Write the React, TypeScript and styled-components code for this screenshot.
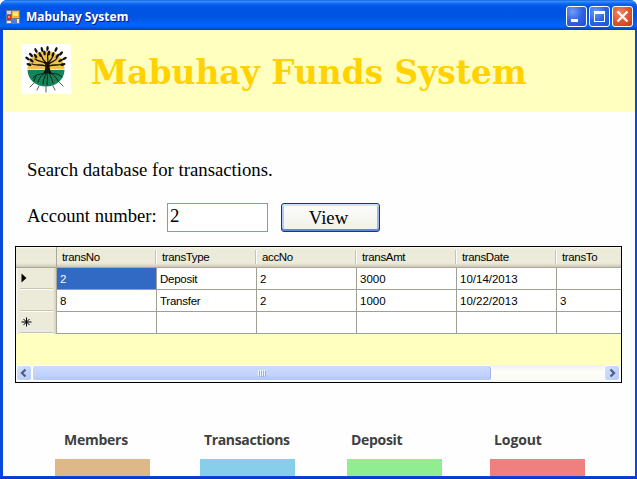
import React from "react";
import styled, { createGlobalStyle, css } from "styled-components";

const GlobalStyle = createGlobalStyle`
  *, *::before, *::after { box-sizing: border-box; }
  html, body { margin: 0; padding: 0; background: #fff; overflow: hidden; }
`;

const Window = styled.div`
  display: flex;
  flex-direction: column;
  width: 637px;
  height: 479px;
  border-radius: 7px 7px 0 0;
  overflow: hidden;
  background: linear-gradient(#0a47dc 476px, #0a35c8 479px);
`;

const TitleBar = styled.header`
  display: flex;
  align-items: center;
  flex: none;
  height: 30px;
  padding: 3px 4px 0 6px;
  background: linear-gradient(
    #0a4fd0 0, #3d95ff 1px, #2a84fa 2px, #0a63ee 4px, #0055e5 7px,
    #0054e3 17px, #0360f6 23px, #0464fa 26px, #0450d8 28px, #013fc0 30px
  );
`;

const WindowTitle = styled.h1`
  flex: 1;
  margin: 1px 0 0 4px;
  font: bold 12px/16px "Noto Sans", sans-serif;
  color: #fff;
  text-shadow: 1px 1px 0 #0a1883;
  white-space: nowrap;
`;

const Controls = styled.div`
  display: flex;
  gap: 2px;
`;

const ControlButton = styled.button<{ $danger?: boolean }>`
  display: block;
  width: 21px;
  height: 21px;
  padding: 0;
  border: 1px solid #fff;
  border-radius: 3px;
  background: ${(p) =>
    p.$danger
      ? "radial-gradient(circle at 35% 30%, #ee8868 0, #e35a32 45%, #c43a12 100%)"
      : "radial-gradient(circle at 30% 25%, #6f9cf5 0, #2f62e2 50%, #1f50d8 100%)"};
  svg { display: block; }
`;

const Client = styled.main`
  display: flex;
  flex-direction: column;
  flex: 1;
  margin: 0 2px 3px 3px;
  background: #fefefe;
`;

const Banner = styled.div`
  display: flex;
  align-items: flex-start;
  flex: none;
  height: 82px;
  padding: 14px 0 0 18px;
  background: #ffffc0;
`;

const Logo = styled.svg`
  display: block;
  flex: none;
`;

const BannerTitle = styled.h2`
  margin: 5px 0 0 20px;
  font: bold 34px/46px "DejaVu Serif", serif;
  color: #ffd200;
  white-space: nowrap;
  transform: scaleX(0.966);
  transform-origin: left;
`;

const serifText = css`
  font-family: "Liberation Serif", serif;
  font-size: 18.75px;
  line-height: 22px;
  color: #000;
`;

const Prompt = styled.p`
  ${serifText}
  margin: 47px 0 0 24px;
  white-space: nowrap;
`;

const SearchRow = styled.div`
  display: flex;
  align-items: center;
  height: 30px;
  margin: 21px 0 0 24px;
`;

const FieldLabel = styled.label`
  ${serifText}
  width: 140px;
  padding-bottom: 3px;
  font-size: 18.6px;
  white-space: nowrap;
`;

const Field = styled.input`
  ${serifText}
  width: 101px;
  height: 29px;
  padding: 0 2px 3px;
  border: 1px solid #7f9db9;
  border-radius: 0;
  background: #fff;
  outline: none;
`;

const ViewButton = styled.button`
  ${serifText}
  width: 99px;
  height: 29px;
  margin-left: 13px;
  padding: 1px 4px 0 0;
  border: 1px solid #0b3b78;
  border-radius: 3px;
  background: linear-gradient(#fdfdfb, #f1f0ea);
  box-shadow: inset 0 2px 0 #cee3fb, inset 0 -2px 0 #6488d8, inset 2px 0 0 #b4ccf3, inset -2px 0 0 #9ab8ee;
`;

const DataGrid = styled.section`
  display: flex;
  flex-direction: column;
  flex: none;
  width: 607px;
  height: 137px;
  margin: 14px 0 0 12px;
  border: 1px solid #000;
  background: #ffffc0;
  overflow: hidden;
`;

const GridRow = styled.div`
  display: grid;
  grid-template-columns: 41px repeat(5, 100px) 64px;
  grid-template-rows: 100%;
  flex: none;
  height: 22px;
  font: 11.5px/22px "Liberation Sans", sans-serif;
  color: #000;
`;

const HeaderRow = styled(GridRow)`
  height: 21px;
  line-height: 20px;
  letter-spacing: -0.35px;
  border-bottom: 1px solid #aca899;
  background: linear-gradient(#fbfaf5 0, #ecead9 2px, #ecead9 16px, #ddd9c9 18px, #cbc7b8 20px);
`;

const Corner = styled.div`
  border-right: 1px solid #aca899;
`;

const HeaderCell = styled.div`
  display: flex;
  align-items: center;
  justify-content: space-between;
  padding-left: 5px;
  white-space: nowrap;
  &::after {
    content: "";
    width: 2px;
    height: 14px;
    border-left: 1px solid #c7c5b2;
    border-right: 1px solid #fff;
  }
  &:last-child::after { display: none; }
`;

const RowHeader = styled.div`
  display: flex;
  align-items: center;
  padding: 0 4px 3px 5px;
  border-right: 1px solid #aca899;
  background: linear-gradient(to right, #fbfaf5 0, #ecead9 2px, #ecead9 37px, #d2cebe 40px);
  position: relative;
  &::after {
    content: "";
    position: absolute;
    left: 4px;
    right: 3px;
    bottom: 0;
    height: 2px;
    border-top: 1px solid #c7c5b2;
    border-bottom: 1px solid #fff;
  }
`;

const Cell = styled.div<{ $selected?: boolean; $text?: boolean }>`
  padding-left: 3px;
  border-right: 1px solid #a09f96;
  border-bottom: 1px solid #a09f96;
  background: ${(p) => (p.$selected ? "#316ac5" : "#fff")};
  color: ${(p) => (p.$selected ? "#fff" : "#000")};
  letter-spacing: ${(p) => (p.$text ? "-0.25px" : "normal")};
  white-space: nowrap;
  &:last-child { border-right: 0; }
`;

const ScrollBar = styled.div`
  display: flex;
  flex: none;
  height: 17px;
  margin-top: auto;
  padding-right: 1px;
  background: linear-gradient(#f0efe8, #fefefb 40%, #f8f8f4);
`;

const ScrollArrow = styled.div`
  display: flex;
  align-items: center;
  justify-content: center;
  width: 16px;
  height: 16px;
  border: 1px solid #fff;
  border-radius: 3px;
  background: linear-gradient(135deg, #d5e1fd, #b5caf9);
`;

const ScrollTrack = styled.div`
  flex: 1;
`;

const ScrollThumb = styled.div`
  display: flex;
  align-items: center;
  justify-content: center;
  width: 460px;
  height: 16px;
  border: 1px solid #fff;
  border-radius: 3px;
  background: linear-gradient(#cddbfe, #c2d3fd 60%, #b2c7f7);
  box-shadow: inset -1px 0 0 #9eb6ec;
`;

const Nav = styled.nav`
  display: grid;
  grid-template-columns: 145px 147px 143px 95px;
  margin: auto 0 0 52px;
`;

const NavItem = styled.div`
  display: flex;
  flex-direction: column;
  width: 95px;
`;

const NavLabel = styled.a<{ $indent: number; $spacing: number }>`
  height: 29px;
  padding-left: ${(p) => p.$indent}px;
  font: bold 14px/20px "Open Sans", sans-serif;
  letter-spacing: ${(p) => p.$spacing}px;
  color: #404040;
  white-space: nowrap;
`;

const NavSwatch = styled.div<{ $color: string }>`
  height: 17px;
  background: ${(p) => p.$color};
`;

const columns = ["transNo", "transType", "accNo", "transAmt", "transDate", "transTo"];

const rows = [
  ["2", "Deposit", "2", "3000", "10/14/2013", ""],
  ["8", "Transfer", "2", "1000", "10/22/2013", "3"],
  ["", "", "", "", "", ""],
];

const navItems = [
  { label: "Members", color: "#deb887", indent: 9, spacing: -0.25 },
  { label: "Transactions", color: "#87ceeb", indent: 4, spacing: -0.35 },
  { label: "Deposit", color: "#90ee90", indent: 4, spacing: -0.3 },
  { label: "Logout", color: "#f08080", indent: 4, spacing: -0.1 },
];

const AppIcon = () => (
  <Logo width="16" height="16" viewBox="0 0 16 16" shapeRendering="crispEdges">
    <rect x="0" y="1" width="14" height="14" fill="#6f7a95" />
    <rect x="1" y="2" width="4" height="3" fill="#c9d4ee" />
    <rect x="6" y="2" width="7" height="7" fill="#f3b52c" />
    <rect x="7" y="3" width="5" height="4" fill="#ffe48a" />
    <rect x="1" y="6" width="4" height="5" fill="#c9302c" />
    <rect x="2" y="7" width="2" height="2" fill="#f08b80" />
    <rect x="6" y="10" width="4" height="4" fill="#4b7fe0" />
    <rect x="11" y="10" width="2" height="4" fill="#dfe5f3" />
    <rect x="1" y="12" width="4" height="2" fill="#e7ebf5" />
  </Logo>
);

const leaves: [number, number, number][] = [
  [8, 20.5, -75], [6.5, 14.5, -55], [10.5, 16.5, -50], [10, 11, -45], [14.5, 12, -35], [15, 6.5, -30],
  [19, 10.5, -20], [21, 5.5, -15], [23.5, 9, -10], [26.5, 4.5, 5], [28, 9, 5],
  [32, 10.5, 20], [35, 5.5, 25], [36.5, 12, 40], [40, 9.5, 45], [39.5, 16.5, 60], [43.5, 14.5, 60], [42, 20.5, 75],
];

const TreeLogo = () => (
  <Logo width="50" height="50" viewBox="0 0 50 50">
    <rect width="50" height="50" fill="#fff" />
    <path d="M6.5 25a18.5 18 0 0 1 37 0z" fill="#efc04a" />
    <path d="M6.5 26h37c0 9-8 16.5-18.5 16.5S6.5 35 6.5 26z" fill="#14855a" />
    <path d="M6.5 25.4h37" stroke="#e9dfa0" strokeWidth=".9" />
    <g fill="none" stroke="#14130c" strokeLinecap="round">
      <path d="M24.5 18c1 5 0 8-1.5 11h7c-2-4-2.500-7-1.500-11" fill="#14130c" strokeWidth="1" />
      <path d="M25 20c-3-3-7-2-11-5M25 19c-3-3-4-5-5-8M27 19c0-5-1-6 0-10M28 19c1-4 4-4 4-8M28 20c3-3 6-2 8-6M25 22c-5-2-9 0-14-2M28 22c5-2 9 0 13-2" strokeWidth="1.3" />
      <path d="M24 29c-4 2-8 0-12 5M24 29c-4 3-5 4-7 9M25 29c-1 5-3 6-3 11M26 29c1 5 0 8 0 12M28 29c2 4 3 6 4 10M29 29c4 2 6 4 8 8M29 29c4 1 8 0 12 4M15 32l-2 5" strokeWidth=".9" />
      <path d="M13 39l-4 4M18 42l-2 4M25 43v5M32 42l2 4M38 38l4 4" strokeWidth=".7" />
    </g>
    {leaves.map(([x, y, angle], i) => (
      <ellipse key={i} cx={x} cy={y} rx="1.25" ry="2.6" fill="#14130c" transform={`rotate(${angle} ${x} ${y})`} />
    ))}
  </Logo>
);

const MinimizeGlyph = () => (
  <svg width="19" height="19" viewBox="0 0 19 19">
    <rect x="4" y="12" width="7" height="3" fill="#fff" />
  </svg>
);

const MaximizeGlyph = () => (
  <svg width="19" height="19" viewBox="0 0 19 19">
    <path d="M4 4h11v11H4zM5 7v7h9V7z" fill="#fff" fillRule="evenodd" />
  </svg>
);

const CloseGlyph = () => (
  <svg width="19" height="19" viewBox="0 0 19 19">
    <path d="M4.5 4.5l10 10M14.5 4.5l-10 10" stroke="#fff" strokeWidth="2.3" />
  </svg>
);

const CurrentRowGlyph = () => (
  <svg width="6" height="10" viewBox="0 0 6 10">
    <path d="M.5 .5l5 4.5-5 4.5z" fill="#000" />
  </svg>
);

const NewRowGlyph = () => (
  <svg width="11" height="10" viewBox="0 0 11 10">
    <path d="M5.5 .5v9M.5 5h10M2.500 2l6 6M8.500 2l-6 6" stroke="#000" strokeWidth="1" />
  </svg>
);

const Chevron = ({ path }: { path: string }) => (
  <svg width="8" height="10" viewBox="0 0 8 10">
    <path d={path} fill="none" stroke="#4d6185" strokeWidth="2.3" />
  </svg>
);

const Grip = () => (
  <svg width="8" height="7" viewBox="0 0 8 7" shapeRendering="crispEdges">
    <path d="M.5 0v6M2.5 0v6M4.5 0v6M6.5 0v6" stroke="#eef4fe" />
    <path d="M1.5 1v6M3.5 1v6M5.5 1v6M7.5 1v6" stroke="#8cb0f8" />
  </svg>
);

export default function App() {
  return (
    <>
      <GlobalStyle />
      <Window>
        <TitleBar>
          <AppIcon />
          <WindowTitle>Mabuhay System</WindowTitle>
          <Controls>
            <ControlButton aria-label="Minimize"><MinimizeGlyph /></ControlButton>
            <ControlButton aria-label="Maximize"><MaximizeGlyph /></ControlButton>
            <ControlButton aria-label="Close" $danger><CloseGlyph /></ControlButton>
          </Controls>
        </TitleBar>
        <Client>
          <Banner>
            <TreeLogo />
            <BannerTitle>Mabuhay Funds System</BannerTitle>
          </Banner>
          <Prompt>Search database for transactions.</Prompt>
          <SearchRow>
            <FieldLabel htmlFor="account">Account number:</FieldLabel>
            <Field id="account" defaultValue="2" />
            <ViewButton>View</ViewButton>
          </SearchRow>
          <DataGrid>
            <HeaderRow>
              <Corner />
              {columns.map((name) => <HeaderCell key={name}>{name}</HeaderCell>)}
            </HeaderRow>
            {rows.map((row, r) => (
              <GridRow key={r}>
                <RowHeader>
                  {r === 0 && <CurrentRowGlyph />}
                  {r === 2 && <NewRowGlyph />}
                </RowHeader>
                {row.map((value, c) => (
                  <Cell key={c} $selected={r === 0 && c === 0} $text={c === 1}>{value}</Cell>
                ))}
              </GridRow>
            ))}
            <ScrollBar>
              <ScrollArrow><Chevron path="M5.5 1.5L2 5l3.5 3.5" /></ScrollArrow>
              <ScrollTrack><ScrollThumb><Grip /></ScrollThumb></ScrollTrack>
              <ScrollArrow><Chevron path="M2.5 1.5L6 5 2.5 8.5" /></ScrollArrow>
            </ScrollBar>
          </DataGrid>
          <Nav>
            {navItems.map((item) => (
              <NavItem key={item.label}>
                <NavLabel $indent={item.indent} $spacing={item.spacing}>{item.label}</NavLabel>
                <NavSwatch $color={item.color} />
              </NavItem>
            ))}
          </Nav>
        </Client>
      </Window>
    </>
  );
}
